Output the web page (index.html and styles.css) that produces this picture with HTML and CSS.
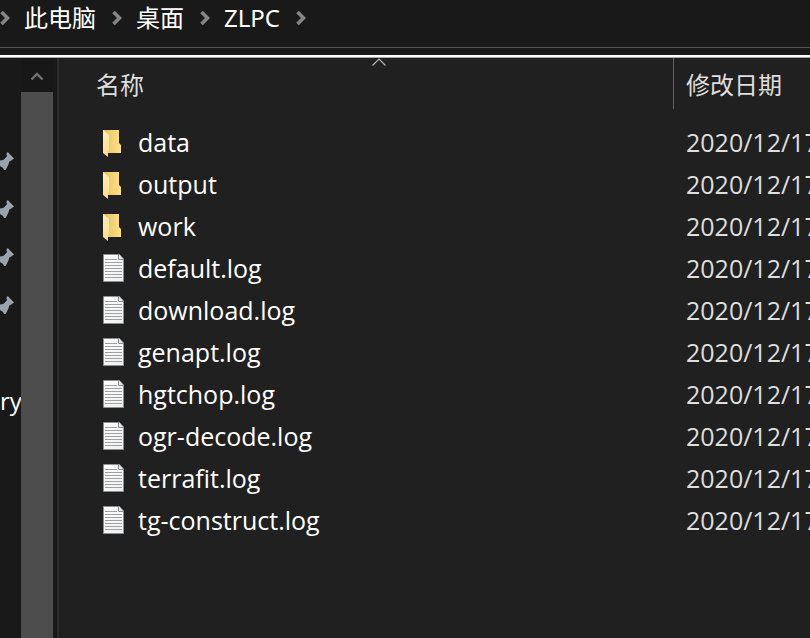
FILE: index.html
```html
<!DOCTYPE html>
<html lang="zh-CN">
<head>
<meta charset="utf-8">
<title>ZLPC</title>
<link rel="stylesheet" href="styles.css">
</head>
<body>
<svg class="symbols" aria-hidden="true">
  <defs>
    <linearGradient id="folder-back" x1="0" x2="1"><stop offset="0" stop-color="#e9c062"/><stop offset="1" stop-color="#ffe187"/></linearGradient>
    <linearGradient id="folder-front" x1="0" x2="0" y1="0" y2="1"><stop offset="0" stop-color="#fff0bd"/><stop offset="1" stop-color="#fbdc83"/></linearGradient>
    <linearGradient id="paper" x1="0" x2="1" y1="0" y2="1"><stop offset="0" stop-color="#ffffff"/><stop offset="1" stop-color="#eeeff1"/></linearGradient>
  </defs>
  <symbol id="chevron" viewBox="0 0 12 16"><path d="M3.5 2 9.5 8 3.5 14" fill="none" stroke="#858585" stroke-width="3.6"/></symbol>
  <symbol id="pin" viewBox="0 0 14 18"><path d="M7.7 0 14 6.4 12 8 9.2 9.8 8.5 12.5 5.7 18H4.3L2.7 15.7 0 14V8.5L3.3 8 6.9 4.5 6.4 1.7Z" fill="#97a4ab"/></symbol>
  <symbol id="folder" viewBox="0 -4 22 32"><path d="M0 0H16V13L18 15V23H0Z" fill="url(#folder-back)"/><path d="M0 0 6 5V20.500L5 21V27L0 23Z" fill="url(#folder-front)"/></symbol>
  <symbol id="log" viewBox="0 -2 22 32"><path d="M.5.5H16.500L20.500 5V27.500H.5Z" fill="url(#paper)" stroke="#8e8f91"/><path d="M15.500 1V5.500H20" fill="#e2e3e4" stroke="#8e8f91"/><path d="M2 5.500H14M2 8.500H19M2 11.500H19M2 14.500H19M2 17.500H19M2 20.500H19M2 23.500H19" stroke="#a0a1a3"/></symbol>
</svg>

<nav class="address" aria-label="路径">
  <svg class="chevron"><use href="#chevron"/></svg>
  <a href="#">此电脑</a>
  <svg class="chevron"><use href="#chevron"/></svg>
  <a href="#">桌面</a>
  <svg class="chevron"><use href="#chevron"/></svg>
  <a href="#">ZLPC</a>
  <svg class="chevron"><use href="#chevron"/></svg>
</nav>

<div class="explorer">
  <aside class="sidebar">
    <ul class="pins">
      <li><svg class="pin"><use href="#pin"/></svg></li>
      <li><svg class="pin"><use href="#pin"/></svg></li>
      <li><svg class="pin"><use href="#pin"/></svg></li>
      <li><svg class="pin"><use href="#pin"/></svg></li>
      <li></li>
      <li>ry</li>
    </ul>
  </aside>
  <div class="scrollbar">
    <button class="scroll-up" type="button" aria-label="向上滚动"><svg viewBox="0 0 12 10"><path d="M.5 8.500 6 3 11.500 8.500" fill="none" stroke="#727272" stroke-width="2.400"/></svg></button>
    <div class="thumb"></div>
  </div>
  <main class="files">
    <table>
      <colgroup><col class="col-name"><col class="col-date"></colgroup>
      <thead>
        <tr>
          <th scope="col" aria-sort="ascending">名称<svg class="sort" viewBox="0 0 14 8"><path d="M.5 7.500 7 1 13.500 7.500" fill="none" stroke="#b5b5b5" stroke-width="1.200"/></svg></th>
          <th scope="col" class="date">修改日期</th>
        </tr>
      </thead>
      <tbody>
        <tr><td><span class="entry"><svg class="icon"><use href="#folder"/></svg>data</span></td><td class="date">2020/12/17</td></tr>
        <tr><td><span class="entry"><svg class="icon"><use href="#folder"/></svg>output</span></td><td class="date">2020/12/17</td></tr>
        <tr><td><span class="entry"><svg class="icon"><use href="#folder"/></svg>work</span></td><td class="date">2020/12/17</td></tr>
        <tr><td><span class="entry"><svg class="icon"><use href="#log"/></svg>default.log</span></td><td class="date">2020/12/17</td></tr>
        <tr><td><span class="entry"><svg class="icon"><use href="#log"/></svg>download.log</span></td><td class="date">2020/12/17</td></tr>
        <tr><td><span class="entry"><svg class="icon"><use href="#log"/></svg>genapt.log</span></td><td class="date">2020/12/17</td></tr>
        <tr><td><span class="entry"><svg class="icon"><use href="#log"/></svg>hgtchop.log</span></td><td class="date">2020/12/17</td></tr>
        <tr><td><span class="entry"><svg class="icon"><use href="#log"/></svg>ogr-decode.log</span></td><td class="date">2020/12/17</td></tr>
        <tr><td><span class="entry"><svg class="icon"><use href="#log"/></svg>terrafit.log</span></td><td class="date">2020/12/17</td></tr>
        <tr><td><span class="entry"><svg class="icon"><use href="#log"/></svg>tg-construct.log</span></td><td class="date">2020/12/17</td></tr>
      </tbody>
    </table>
  </main>
</div>
</body>
</html>
```
FILE: styles.css
```css
* { box-sizing: border-box; }

body {
  margin: 0;
  min-height: 100vh;
  display: flex;
  flex-direction: column;
  overflow: hidden;
  background: #191919;
  color: #fff;
  font: 24px/32px "Noto Sans", "Noto Sans CJK SC", sans-serif;
}

svg { display: block; flex: none; }

.symbols { position: absolute; width: 0; height: 0; }

.address {
  display: flex;
  align-items: center;
  gap: 14px;
  height: 48px;
  margin-left: -2px;
  padding-bottom: 12px;
  border-bottom: 1px solid #555;
}

.address a { color: inherit; text-decoration: none; white-space: nowrap; }

.chevron { width: 12px; height: 16px; }

.explorer {
  flex: 1;
  display: flex;
  margin-top: 7px;
  border-top: 2px solid #fff;
  box-shadow: inset 0 1px #a8a8a8;
}

.sidebar { width: 21px; flex: none; overflow: hidden; font-family: "Open Sans", sans-serif; }

.pins { list-style: none; margin: 0; padding: 80px 0 0; }

.pins li { height: 48px; display: flex; align-items: center; }

.pin { width: 14px; height: 18px; }

.scrollbar {
  width: 32px;
  flex: none;
  display: flex;
  flex-direction: column;
  margin-right: 4px;
  margin-top: 1px;
  background: #171717;
}

.scroll-up {
  height: 34px;
  padding: 2px 0 0;
  border: 0;
  background: none;
  display: grid;
  place-items: center;
}

.scroll-up svg { width: 12px; height: 10px; }

.thumb { flex: 1; background: #4d4d4d; }

.files {
  flex: 1;
  min-width: 0;
  overflow: hidden;
  margin-top: 1px;
  padding-left: 37px;
  border-left: 2px solid #2b2b2b;
  background: #202020;
}

table { width: 100%; table-layout: fixed; border-collapse: separate; border-spacing: 0; }

.col-date { width: 137px; }

th, td { padding: 0; text-align: left; font-weight: 400; white-space: nowrap; }

th { height: 51px; position: relative; padding-top: 2px; color: #dedede; }

.sort { position: absolute; top: 0; left: 276px; width: 14px; height: 8px; }

.date { padding-left: 13px; color: #dedede; }

th.date { border-left: 1px solid #636363; padding-left: 12px; }

tbody::before { content: ""; display: block; height: 12px; }

td { height: 42px; font-family: "Open Sans", sans-serif; font-size: 25px; }

.entry { display: flex; align-items: center; gap: 13px; padding-left: 7px; }

.icon { width: 22px; height: 32px; }
```
